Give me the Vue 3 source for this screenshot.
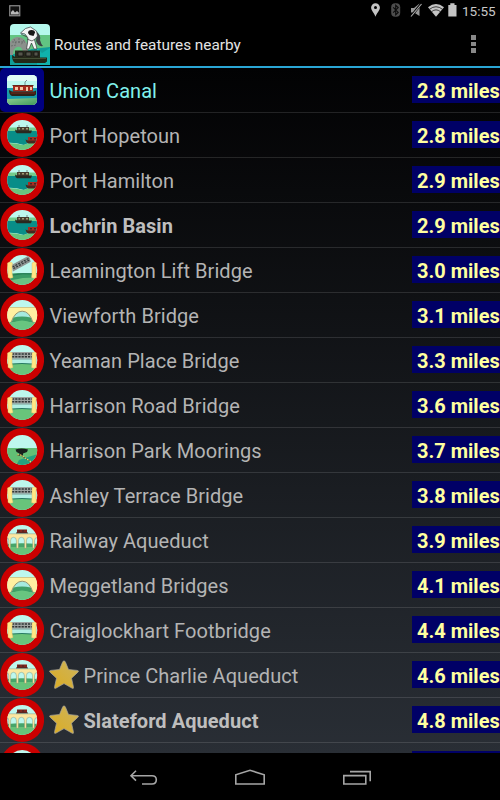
<template>
  <div class="screen">
    <!-- status bar -->
    <div class="status-bar">
      <svg class="picture-icon" width="12" height="12" viewBox="0 0 12 12">
        <rect x="0.75" y="0.75" width="10" height="10" fill="#111" stroke="#8e8e8e" stroke-width="1.2" />
        <path d="M2 9.5V7l2-2 2 2.5L8 6l1.8 1.5v2z" fill="#b8b8b8" />
      </svg>
      <svg class="status-icons" width="90" height="22" viewBox="0 0 90 22">
        <path d="M5.5 3.2a4.4 4.4 0 0 1 4.4 4.4c0 3.2-3.3 5.600-4.400 9.200C4.400 13.200 1.100 10.800 1.100 7.600A4.400 4.400 0 0 1 5.500 3.200z" fill="#c4c4c4" />
        <circle cx="5.500" cy="7.500" r="1.500" fill="#000" />
        <rect x="21.200" y="3.200" width="9" height="13.600" rx="4" fill="#4d4d4d" />
        <path d="M23.200 7.400l5 5-2.500 2.300V5.300l2.500 2.300-5 5" fill="none" stroke="#0a0a0a" stroke-width="1.100" />
        <path d="M41 8h3L49.500 3.500V16L44 12.500H41z" fill="#999" />
        <path d="M41 16.500L51 4" stroke="#000" stroke-width="2.400" />
        <path d="M41 16.500L51.500 4" stroke="#b0b0b0" stroke-width="1.100" />
        <path d="M58 7.200Q66 1 74 7.200L66 16.800z" fill="#c4c4c4" />
        <path d="M59.500 9.300Q66 4.200 72.500 9.300M61.500 11.700Q66 8 70.500 11.700" fill="none" stroke="#1a1a1a" stroke-width="0.800" />
        <path d="M78.300 5h2V3.200h4.200V5h2v11.500h-8.200z" fill="#c4c4c4" />
      </svg>
      <span class="clock">15:55</span>
    </div>

    <!-- action bar -->
    <header class="action-bar">
      <svg class="app-icon" width="40" height="41" viewBox="0 0 40 41">
        <defs>
          <clipPath id="app-clip"><path d="M0 41V4a4 4 0 0 1 4-4h32a4 4 0 0 1 4 4v37z" /></clipPath>
        </defs>
        <g clip-path="url(#app-clip)">
          <rect width="40" height="41" fill="#b5f8ec" />
          <rect y="11" width="40" height="30" fill="#62c482" />
          <path d="M0 41V31L22 25l18-2v18z" fill="#109c98" />
          <path d="M27 24l5 5 8-5v17H27z" fill="#10b2ac" />
          <path d="M0 27V18Q5 11 12 14q6 3 6 13l-5 1q-1-6-6-5-4 1-4 8H0z" fill="#8b908c" />
          <path d="M2 18l13 0M1 22l5-1M4 15l2 5M9 14v5M14 16l-3 5" stroke="#5c625f" stroke-width="0.700" stroke-dasharray="2 1" />
          <path d="M27 8q4 3 3 8 1 4 3 6-5 1-7-5z" fill="#3b4144" />
          <path d="M10.500 9l5-4.500 5-1.500 6 4 1 5-3 4 1.500 5 1 4h-3l-2.500-6-2.500 6h-2.500l1-6 .5-5-3-4z" fill="#f4f5f5" stroke="#343a3c" stroke-width="0.700" />
          <path d="M18 9q0-3 3.500-3t3.500 2.500l-1.500 3.500-4-1z" fill="#181818" />
          <path d="M11 10l6 3M17 15l5 2 3-2" fill="none" stroke="#333" stroke-width="0.700" />
          <path d="M5 26.500h25v7.500H5z" fill="#282a1d" />
          <path d="M8 28h5v4H8zm8 0h5v4h-5zm8 0h4v4h-4z" fill="#55554a" stroke="#111" stroke-width="0.800" />
          <path d="M2 31l4 2.500h31v4l-2 1.500H5q-3-2-3-8z" fill="#232817" />
          <path d="M3 34.500h33" stroke="#536044" stroke-width="0.700" />
        </g>
      </svg>
      <h1>Routes and features nearby</h1>
      <div class="overflow-menu"><i></i><i></i><i></i></div>
    </header>

    <!-- list of places -->
    <main class="places">
      <div v-for="(place, index) in places" :key="index" class="place">
        <svg class="place-icon" width="44" height="44" viewBox="0 0 44 44">
          <defs>
            <clipPath :id="`clip-${index}`">
              <rect v-if="place.type === 'canal'" x="7" y="7" width="30" height="30" rx="4.500" />
              <circle v-else cx="22.200" cy="22" r="15" />
            </clipPath>
            <linearGradient id="grass" x1="0" y1="0" x2="1" y2="1">
              <stop offset="0" stop-color="#8bcf91" />
              <stop offset="1" stop-color="#3c9558" />
            </linearGradient>
          </defs>
          <rect v-if="place.type === 'canal'" width="44" height="44" rx="5" fill="#000080" />
          <circle v-else cx="22.200" cy="22" r="21.900" fill="#cb0000" />

          <g :clip-path="`url(#clip-${index})`">
            <rect x="6" y="6" width="32" height="32" fill="#bdf8ee" />

            <template v-if="place.type === 'canal'">
              <rect x="7" y="7" width="30" height="6" fill="#e0fbf6" />
              <rect x="7" y="20" width="30" height="11" fill="#199ba8" />
              <path d="M7 31l30-1v8H7z" fill="url(#grass)" />
              <path d="M25 18V14l2-2" fill="none" stroke="#66797a" stroke-width="0.800" />
              <rect x="13" y="17.500" width="20" height="6" fill="#a52a1c" />
              <path d="M12.500 17.500h21" stroke="#65261a" stroke-width="1.200" />
              <path d="M15 19h3v3h-3zm5 0h3v3h-3zm6 0h2v4h-2zm4 0h2v3h-2z" fill="#f2c6a2" />
              <path d="M9 22l3 1.500h22l2-1v4l-2 1.500H12q-3-1-3-6z" fill="#2f2118" />
              <path d="M11 25h24" stroke="#8c2b1d" stroke-width="0.800" />
            </template>

            <template v-else-if="place.type === 'port'">
              <rect x="6" y="14.500" width="32" height="4" fill="#74cc8c" />
              <path d="M6 18h32v10q-9 1-14 4Q14 29 6 30z" fill="#088d88" />
              <path d="M6 30q10 0 17 2 7-3 15-3v9H6z" fill="#69c47d" />
              <path d="M17 14h12v4H17z" fill="#473e2f" />
              <path d="M18.500 15h1.500v1.500h-1.500zm3.500 0h2v1.500h-2zm4 0h2v1.500h-2z" fill="#a0a078" />
              <path d="M19 12v2m8-2v2" stroke="#59605a" stroke-width="0.700" />
              <path d="M15 16.500l2 1h15l-1 2.700H17q-2-1-2-3.700z" fill="#292a20" />
              <path d="M28 24h10v4H28z" fill="#a92d22" />
              <path d="M30 25h2v1.500h-2zm4 0h2v1.500h-2z" fill="#382b22" />
              <path d="M25.500 26.500l2.500 1h10V30.500H28q-2-1-2.500-4z" fill="#49261f" />
            </template>

            <template v-else-if="place.type === 'lift'">
              <path d="M6 26l32-1v13H6z" fill="#6ac282" />
              <path d="M6 27q7-2 12-2h20v5q-14-1-20 1-7 1-12 3z" fill="#399b66" />
              <path d="M13 27q10-2 19-1" fill="none" stroke="#267858" />
              <path d="M11.500 17L29 7.500l1.700 6.300-17.700 9.700z" fill="#8d9391" />
              <path d="M13 19.800l16.500-8.900" stroke="#303636" stroke-width="3" stroke-dasharray="2 1.200" />
              <path d="M13 19.800l16.500-8.900" stroke="#9ba2a0" stroke-width="0.600" />
            </template>

            <template v-else-if="place.type === 'arch'">
              <rect x="6" y="14.500" width="32" height="16" fill="#fff0a0" />
              <path d="M6 14.500h32" stroke="#cfbd77" stroke-width="0.800" />
              <path d="M6 30l6-1.500h20l6 1.500v8H6z" fill="#68c580" />
              <path d="M11.500 29.500Q15 18.200 22.200 18.200T32.500 29.500z" fill="#a5eadf" />
              <path d="M13.500 24.600q8.500-2.400 17.200 0l2 4.900H11.500z" fill="#3f9f66" />
              <path d="M11.500 30q10.500-5 21 0l-10 3z" fill="#68c580" />
              <path d="M11 29.500Q15 18.200 22.200 18.200T33 29.500" fill="none" stroke="#8c8a6c" stroke-width="0.900" />
            </template>

            <template v-else-if="place.type === 'bridge'">
              <rect x="6" y="21" width="32" height="5" fill="#b0efe4" />
              <path d="M6 27q16-3 32 0v11H6z" fill="#68c47b" />
              <path d="M12 26q10-1 20 0" fill="none" stroke="#267b63" stroke-width="1.200" />
              <rect x="11" y="14" width="21.500" height="6.500" fill="#9da3a1" />
              <path d="M12 16h20M12 18.700h20" stroke="#303737" stroke-width="1.500" stroke-dasharray="2.200 1" />
              <path d="M12 21h20" stroke="#687a77" stroke-width="0.700" />
            </template>

            <template v-else-if="place.type === 'mooring'">
              <rect x="6" y="20" width="32" height="18" fill="#62bf75" />
              <path d="M38 26L28 29l-9 3-3 6h22z" fill="#25a07f" />
              <path d="M15.500 21.500q6-2 12.500 0l-1 2.500-4 1.500v2h-3.500v-2l-3-1.500z" fill="#18201d" />
              <path d="M17 27q4-1 8 3l8 5" fill="none" stroke="#222" stroke-width="1" />
              <path d="M17 27q4-1 8 3l8 5" fill="none" stroke="#e9d36b" stroke-width="1.100" stroke-dasharray="2 0.800" />
            </template>

            <template v-else>
              <path d="M6 26h32v12H6z" fill="#66c379" />
              <path d="M6 26q16-1.500 32 0v3H6z" fill="#46a56a" />
              <path d="M17 11.500h10V15H17z" fill="#82251c" />
              <path d="M16 15h12M18 13h2m2 0h2" stroke="#332a26" stroke-width="1" />
              <path
                d="M6 15.800h32v3.500q-3.500 0-3.500 3.300v7.600h-1.900v-7.600q0-3.300-3.100-3.300t-3.100 3.300v7.600h-2v-7.600q0-3.300-3-3.300t-3 3.300v7.600h-2v-7.600q0-3.300-2.900-3.300t-2.900 3.300v7.600H8.800v-7.600q0-3.300-2.800-3.300z"
                fill="#fbe7a0"
                stroke="#637666"
                stroke-width="0.350"
              />
            </template>
          </g>

          <!-- piers stand over the red rim -->
          <path
            v-if="place.type === 'lift' || place.type === 'bridge'"
            d="M7.500 15q2.500-2 5 0l-.5 3v7l1 4.500q-2.500 1.500-5 0V25l-.5-7zM32 15q2.500-2 4.500 0L36 18v7l.5 4.500q-2.500 1.500-5 0l.5-4.500z"
            fill="#ffe886"
            stroke="#dcb96a"
            stroke-width="0.400"
          />
        </svg>

        <svg v-if="place.starred" class="star" width="30" height="30" viewBox="0 0 30 30">
          <defs>
            <linearGradient id="gold" x1="1" y1="0" x2="0" y2="1">
              <stop offset="0" stop-color="#ccb35e" />
              <stop offset="1" stop-color="#dcad20" />
            </linearGradient>
          </defs>
          <path
            d="M15 .9q1 0 1.500 1.400l3 7.200 8.700.9q2.300.2.500 2l-6.200 5.800 1.900 8.500q.5 2.600-1.600 1.300L15 23.600l-7.800 4.400q-2.100 1.300-1.600-1.300l1.900-8.500L1.300 12.400q-1.800-1.800.5-2l8.700-.9 3-7.200Q14 .9 15 .9z"
            fill="url(#gold)"
            stroke="#aaa69c"
            stroke-width="0.700"
          />
        </svg>

        <span class="name" :class="{ route: place.type === 'canal', bold: place.bold }">{{ place.name }}</span>
        <span class="distance">{{ place.miles }}</span>
      </div>
    </main>

    <!-- navigation bar -->
    <nav class="nav-bar">
      <svg width="300" height="47" viewBox="100 753 300 47" fill="none" stroke="#a6a6a6" stroke-width="1.600">
        <path d="M136 770.800l-5 4.900 5 4.900M131 775.700h21q4.300 0 4.300 4t-4.300 4.300h-10" />
        <path d="M235.800 784v-9.200l14.200-4.500 14.200 4.500v9.200z" />
        <path d="M343.800 775.600h22V784h-22zM350 771.600h20.200v9.600" />
      </svg>
    </nav>
  </div>
</template>

<script setup>
const places = [
  { name: "Union Canal", miles: "2.8 miles", type: "canal" },
  { name: "Port Hopetoun", miles: "2.8 miles", type: "port" },
  { name: "Port Hamilton", miles: "2.9 miles", type: "port" },
  { name: "Lochrin Basin", miles: "2.9 miles", type: "port", bold: true },
  { name: "Leamington Lift Bridge", miles: "3.0 miles", type: "lift" },
  { name: "Viewforth Bridge", miles: "3.1 miles", type: "arch" },
  { name: "Yeaman Place Bridge", miles: "3.3 miles", type: "bridge" },
  { name: "Harrison Road Bridge", miles: "3.6 miles", type: "bridge" },
  { name: "Harrison Park Moorings", miles: "3.7 miles", type: "mooring" },
  { name: "Ashley Terrace Bridge", miles: "3.8 miles", type: "bridge" },
  { name: "Railway Aqueduct", miles: "3.9 miles", type: "aqueduct" },
  { name: "Meggetland Bridges", miles: "4.1 miles", type: "arch" },
  { name: "Craiglockhart Footbridge", miles: "4.4 miles", type: "bridge" },
  { name: "Prince Charlie Aqueduct", miles: "4.6 miles", type: "aqueduct", starred: true },
  { name: "Slateford Aqueduct", miles: "4.8 miles", type: "aqueduct", starred: true, bold: true },
  // only the top edge of this row is on screen
  { name: "", miles: "", type: "aqueduct" },
];
</script>

<style>
body {
  margin: 0;
  background: #000;
}
</style>

<style scoped>
.screen {
  width: 500px;
  height: 800px;
  display: flex;
  flex-direction: column;
  overflow: hidden;
  background: #000;
  font-family: Roboto, "Liberation Sans", sans-serif;
}

.status-bar {
  height: 22px;
  flex-shrink: 0;
  display: flex;
  align-items: flex-start;
}

.picture-icon {
  margin: 5px 0 0 9px;
}

.status-icons {
  margin-left: auto;
}

.clock {
  width: 40px;
  color: #c8c8c8;
  font-size: 13.5px;
  line-height: 23px;
  text-indent: 2px;
}

.action-bar {
  height: 44px;
  flex-shrink: 0;
  display: flex;
  align-items: center;
  border-bottom: 2px solid #2aa6d5;
}

.app-icon {
  margin: 1px 4px 0 10px;
}

.action-bar h1 {
  margin: 2px 0 0;
  color: #e4e4e4;
  font-size: 15.35px;
  font-weight: 400;
  white-space: nowrap;
}

.overflow-menu {
  display: flex;
  flex-direction: column;
  gap: 2px;
  margin: 0 24px 0 auto;
}

.overflow-menu i {
  width: 5px;
  height: 4.5px;
  background: #888;
}

.places {
  height: 685px;
  flex-shrink: 0;
  overflow: hidden;
  background: linear-gradient(#020203, #292e35);
}

.place {
  height: 44px;
  display: flex;
  align-items: center;
  border-bottom: 1px solid rgba(255, 255, 255, 0.12);
}

.place-icon {
  flex-shrink: 0;
  margin-right: 5.5px;
}

.star {
  flex-shrink: 0;
  margin: 0 4.5px 0 -0.5px;
}

.name {
  margin-top: 2px;
  color: #b4b4b4;
  font-size: 20px;
  letter-spacing: 0.05px;
  line-height: 26px;
  white-space: nowrap;
}

.name.bold {
  color: #bebebe;
  font-weight: 700;
}

.name.route {
  color: #80f0ec;
}

.distance {
  box-sizing: border-box;
  width: 88px;
  height: 27px;
  margin: 0 0 1px auto;
  padding-left: 5px;
  background: #000066;
  color: #ffffa0;
  font-size: 20px;
  font-weight: 700;
  line-height: 30px;
  white-space: nowrap;
}

.nav-bar {
  flex: 1;
  display: flex;
  justify-content: center;
}
</style>
